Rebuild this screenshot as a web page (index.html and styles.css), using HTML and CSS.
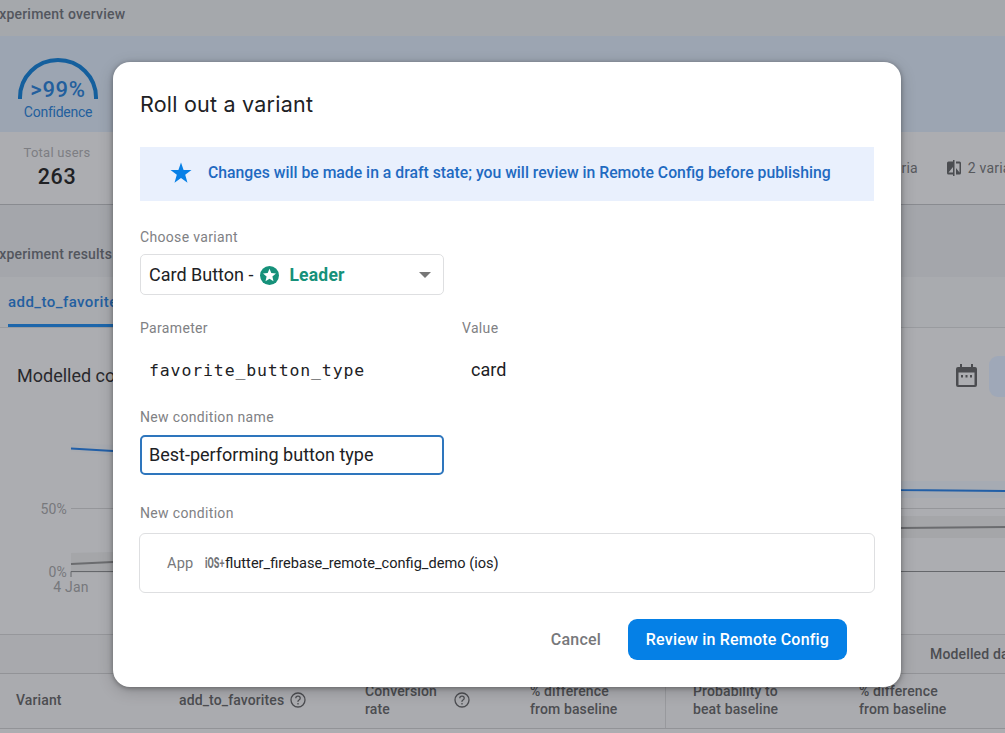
FILE: index.html
```html
<!DOCTYPE html>
<html lang="en">
<head>
<meta charset="utf-8">
<title>Roll out a variant</title>
<link rel="stylesheet" href="styles.css">
</head>
<body>
<main class="page">
  <header class="overview"><span class="section-title">Experiment overview</span></header>
  <section class="confidence">
    <div class="gauge">
      <svg class="gauge-arc" width="82" height="42" viewBox="0 0 82 42"><path d="M3 41V39.500A38 37.500 0 0 1 79 39.500V41" fill="none" stroke="#145f9d" stroke-width="4"/></svg>
      <span class="gauge-value">&gt;99%</span>
      <span class="gauge-label">Confidence</span>
    </div>
  </section>
  <section class="stats">
    <div class="users"><span class="users-label">Total users</span><span class="users-value">263</span></div>
    <div class="meta">
      <span class="criteria">criteria</span>
      <svg class="compare" width="14" height="16" viewBox="0 0 14 16"><path d="M6 1.500H1.500Q0 1.500 0 3V13Q0 14.500 1.500 14.500H6V16H7.500V0H6ZM6 12.500H1.500L6 7ZM9 1.500H12.500Q14 1.500 14 3V13Q14 14.500 12.500 14.500H9V8L12.500 12.500V3.500H9Z" fill="#4b4d51" fill-rule="evenodd"/></svg>
      <span class="variants">2 variants</span>
    </div>
  </section>
  <section class="results"><span class="section-title">Experiment results</span></section>
  <nav class="tabs"><span class="tab">add_to_favorites</span></nav>
  <section class="chart-card">
    <div class="chart-head">
      <h2 class="chart-title">Modelled conversion</h2>
      <div class="chart-tools">
        <svg width="22" height="24" viewBox="0 0 22 24"><path d="M4 0H6V3H15V0H17V3H19Q21 3 21 5V21Q21 23 19 23H2Q0 23 0 21V5Q0 3 2 3H4ZM2.500 8.500V21H18.500V8.500Z" fill="#4b4c50" fill-rule="evenodd"/><path d="M5 11h2v2.500H5zM9.500 11h2v2.500h-2zM14 11h2v2.500h-2z" fill="#4b4c50"/></svg>
        <span class="range"></span>
      </div>
    </div>
    <svg class="chart" width="1005" height="200" viewBox="0 400 1005 200">
      <path d="M71 553L113 552V573H71Z" fill="#a5a6a9"/>
      <path d="M71 443L113 445V456L71 451Z" fill="#a8abb1"/>
      <path d="M900 481H1005V498H900Z" fill="#a6abb3"/>
      <path d="M900 516H1005V538H900Z" fill="#a5a6a9"/>
      <path d="M71 508.500H1005" stroke="#95969a"/>
      <path d="M71 577V571.500H1005" fill="none" stroke="#65676b"/>
      <path d="M71 448.500L113 451L500 475L900 490L1005 491" fill="none" stroke="#225fa7" stroke-width="2"/>
      <path d="M71 564L113 562L500 540L900 528L1005 527" fill="none" stroke="#6b6c6f" stroke-width="2"/>
      <g class="axis"><text x="67" y="513.500" text-anchor="end">50%</text><text x="67" y="577" text-anchor="end">0%</text><text x="71" y="591.500" text-anchor="middle">4 Jan</text></g>
    </svg>
  </section>
  <section class="group-row"><span>Modelled data</span></section>
  <section class="columns">
    <span class="col">Variant</span>
    <span class="col with-help">add_to_favorites <svg width="16" height="16" viewBox="0 0 16 16"><circle cx="8" cy="8" r="7" fill="none" stroke="#4c4d51" stroke-width="1.300"/><path d="M5.800 6.300Q5.800 4.200 8 4.200T10.200 6.200Q10.200 7.300 9 8T8 9.800M8 11v1.400" fill="none" stroke="#4c4d51" stroke-width="1.300"/></svg></span>
    <span class="col">Conversion<br>rate</span>
    <span class="col help-cell"><svg width="16" height="16" viewBox="0 0 16 16"><circle cx="8" cy="8" r="7" fill="none" stroke="#4c4d51" stroke-width="1.300"/><path d="M5.800 6.300Q5.800 4.200 8 4.200T10.200 6.200Q10.200 7.300 9 8T8 9.800M8 11v1.400" fill="none" stroke="#4c4d51" stroke-width="1.300"/></svg></span>
    <span class="col">% difference<br>from baseline</span>
    <span class="col divided">Probability to<br>beat baseline</span>
    <span class="col">% difference<br>from baseline</span>
  </section>
</main>

<div class="dialog" role="dialog">
  <h1 class="title">Roll out a variant</h1>
  <div class="notice">
    <svg width="22" height="22" viewBox="1 1 22 22"><path d="M12 1.500L14.600 9H22.500L16.200 13.800L18.500 21.800L12 17L5.500 21.800L7.800 13.800L1.500 9H9.400Z" fill="#0880e6"/></svg>
    <span>Changes will be made in a draft state; you will review in Remote Config before publishing</span>
  </div>
  <label class="label">Choose variant</label>
  <div class="select">
    <span class="select-text">Card Button -</span>
    <svg class="badge" width="19" height="19" viewBox="0 0 19 19"><circle cx="9.500" cy="9.500" r="9.500" fill="#16917a"/><path d="M9.500 2.800L11.300 7.100L16 7.500L12.400 10.600L13.500 15.200L9.500 12.700L5.500 15.200L6.600 10.600L3 7.500L7.700 7.100Z" fill="#fff"/></svg>
    <strong class="leader">Leader</strong>
    <svg class="caret" width="12" height="6" viewBox="0 0 12 6"><path d="M0 0H12L6 6Z" fill="#777"/></svg>
  </div>
  <div class="pair">
    <div class="param"><span class="label">Parameter</span><code class="mono">favorite_button_type</code></div>
    <div class="value"><span class="label">Value</span><span class="card">card</span></div>
  </div>
  <label class="label">New condition name</label>
  <div class="input">Best-performing button type</div>
  <span class="label condition-label">New condition</span>
  <div class="condition"><span class="app">App</span><span class="ios-slot"><span class="ios">iOS<span class="plus">+</span></span></span><span class="app-name">flutter_firebase_remote_config_demo (ios)</span></div>
  <footer class="actions"><button class="cancel">Cancel</button><button class="review">Review in Remote Config</button></footer>
</div>
</body>
</html>
```
FILE: styles.css
```css
* { box-sizing: border-box; }
body { margin: 0; width: 1005px; height: 733px; overflow: hidden; position: relative; background: #acadb1; font-family: Roboto, sans-serif; color: #202124; }
svg { display: block; flex: none; }
.page { display: flex; flex-direction: column; height: 733px; overflow: hidden; white-space: nowrap; }
.page > * { flex: none; }
.section-title { font-size: 14px; font-weight: 500; letter-spacing: .22px; color: #53565e; margin-left: -9px; line-height: 20px; }
.overview { height: 36px; padding-top: 4px; background: #a5a8ac; }
.confidence { height: 96px; background: #9ca5b2; padding: 22px 0 0 17px; }
.gauge { width: 82px; display: flex; flex-direction: column; align-items: center; color: #235f9d; }
.gauge-value { font: 500 22px/24px Roboto, sans-serif; letter-spacing: .7px; margin-top: -22px; }
.gauge-label { font-size: 14px; line-height: 20px; letter-spacing: -.25px; }
.stats { height: 73px; background: #acadb1; border-bottom: 1px solid #898b90; display: flex; justify-content: space-between; padding: 11px 0 0 24px; }
.users { width: 66px; display: flex; flex-direction: column; align-items: center; }
.users-label { font-size: 13px; line-height: 20px; letter-spacing: .25px; color: #7d7e83; }
.users-value { font: 500 21.500px/28px Roboto, sans-serif; letter-spacing: .6px; color: #202124; }
.meta { width: 132px; height: 50px; display: flex; align-items: center; color: #57595d; font-size: 14px; overflow: hidden; }
.criteria { width: 47px; display: flex; justify-content: flex-end; letter-spacing: .2px; }
.compare { margin-left: 29px; }
.variants { margin-left: 7px; letter-spacing: .2px; }
.results { height: 72px; background: #a4a6ab; padding-top: 39px; }
.tabs { height: 51px; background: #a9abaf; border-bottom: 1px solid #999b9f; padding-left: 8px; }
.tab { display: inline-block; height: 50px; border-bottom: 3px solid #1d66ab; border-radius: 2px 2px 0 0; padding-top: 15px; font-size: 15px; line-height: 20px; font-weight: 500; letter-spacing: .45px; color: #235fa0; }
.chart-card { height: 306px; background: #acadb1; }
.chart-head { height: 72px; display: flex; justify-content: space-between; padding: 27px 0 0 17px; }
.chart-title { margin: 9px 0 0; font-size: 18px; line-height: 24px; font-weight: 400; color: #29292d; }
.chart-tools { display: flex; gap: 11px; align-items: center; height: 42px; }
.range { width: 16px; height: 41px; border-radius: 9px 0 0 9px; background: #9fa8b8; }
.axis { font-size: 14px; fill: #77787c; letter-spacing: .2px; }
.group-row { height: 40px; background: #a8a9ad; border-top: 1px solid #96979b; border-bottom: 1px solid #929397; display: flex; align-items: center; padding-left: 930px; font-size: 14px; font-weight: 500; letter-spacing: .15px; color: #4c4d51; }
.columns { height: 55px; border-bottom: 1px solid #929397; display: grid; grid-template-columns: 163px 186px 89px 76px 151px 178px 162px; background: #aaabaf; }
.col { display: flex; align-items: center; padding-left: 16px; padding-bottom: 2px; font-size: 14px; line-height: 18px; font-weight: 500; letter-spacing: .12px; color: #4c4d51; }
.with-help { gap: 6px; }
.divided { border-left: 1px solid #98999d; padding-left: 27px; }

.dialog { position: absolute; left: 113px; top: 62px; width: 788px; height: 625px; border-radius: 17px; background: #fff; padding: 0 26px 0 27px; box-shadow: 0 1px 5px rgba(0,0,0,.35), 0 4px 16px rgba(0,0,0,.18); display: flex; flex-direction: column; align-items: flex-start; white-space: nowrap; }
.dialog > * { flex: none; }
.title { margin: 27px 0 0; font: 400 21.500px/30px Inter, Roboto, sans-serif; letter-spacing: .22px; color: #202124; }
.notice { width: 734px; height: 54px; margin: 28px 0 26px; background: #e9f0fd; display: flex; align-items: center; gap: 16px; padding: 0 0 3px 30px; color: #1f6ac1; font-size: 15.770px; font-weight: 500; }
.label { display: block; font-size: 14px; line-height: 20px; letter-spacing: .33px; color: #808184; }
.select { width: 304px; height: 41px; margin: 7px 0 23px; border: 1px solid #dedfe1; border-radius: 5px; display: flex; align-items: center; padding: 0 12px 0 8px; font-size: 18px; }
.badge { margin-left: 7px; margin-top: 1px; }
.leader { margin-left: 10px; font-size: 17.500px; font-weight: 700; letter-spacing: .2px; color: #16917a; }
.caret { margin-left: auto; }
.pair { display: flex; height: 89px; }
.param { width: 322px; }
.mono { display: block; margin: 21px 0 0 9px; font: 16.500px/24px "DejaVu Sans Mono", monospace; letter-spacing: .87px; }
.card { display: block; margin: 20px 0 0 9px; font-size: 18px; line-height: 24px; }
.input { width: 304px; height: 40px; margin-top: 8px; border: 2px solid #2e76bd; border-radius: 5px; padding-left: 7px; font-size: 18px; line-height: 36px; }
.condition-label { margin-top: 28px; }
.condition { width: 736px; height: 60px; margin: 10px 0 0 -1px; border: 1px solid #dedfe1; border-radius: 6px; display: flex; align-items: center; padding-left: 27px; font-size: 14.600px; }
.app { color: #77787b; letter-spacing: .2px; width: 38px; }
.ios-slot { width: 20px; }
.ios { display: inline-block; font-size: 14px; font-weight: 800; color: #737477; transform: scaleX(.65); transform-origin: left center; }
.plus { font-weight: 500; }
.actions { width: 734px; margin-top: 26px; display: flex; justify-content: flex-end; align-items: center; padding-right: 27px; gap: 27px; }
.cancel, .review { border: 0; background: none; padding: 0; font: 500 16px Roboto, sans-serif; letter-spacing: .2px; color: #77787b; }
.review { width: 219px; height: 41px; border-radius: 9px; background: #0580e6; color: #fff; }
```
